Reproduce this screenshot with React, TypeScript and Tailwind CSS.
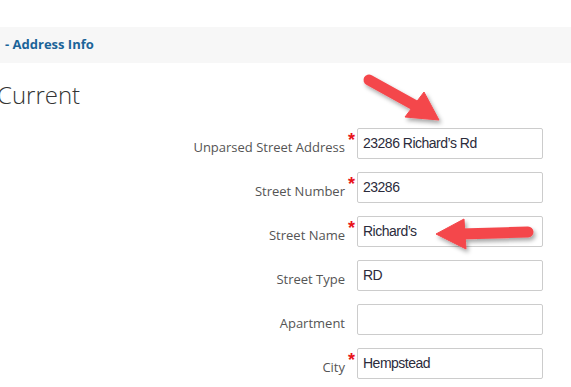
const rows = [
  { label: "Unparsed Street Address", required: true, value: "23286 Richard’s Rd" },
  { label: "Street Number", required: true, value: "23286" },
  { label: "Street Name", required: true, value: "Richard’s" },
  { label: "Street Type", required: false, value: "RD" },
  { label: "Apartment", required: false, value: "" },
  { label: "City", required: true, value: "Hempstead" },
]

function Arrows() {
  return (
    <svg
      className="absolute left-0 top-0 pointer-events-none"
      width={571}
      height={387}
      viewBox="0 0 571 387"
    >
      <defs>
        <filter id="shadow" x="-20%" y="-20%" width="140%" height="140%">
          <feDropShadow dx="2" dy="3" stdDeviation="2" floodColor="#000" floodOpacity="0.35" />
        </filter>
      </defs>
      <g filter="url(#shadow)" fill="#f4474c" stroke="#f4474c">
        <line x1="369" y1="80" x2="416" y2="106" strokeWidth="11" strokeLinecap="round" />
        <polygon points="424,92 405,117 439,120" strokeWidth="1" strokeLinejoin="round" />
        <line x1="528" y1="232" x2="460" y2="234" strokeWidth="11" strokeLinecap="round" />
        <polygon points="464,219 466,249 436,234" strokeWidth="1" strokeLinejoin="round" />
      </g>
    </svg>
  )
}

export default function App() {
  return (
    <main className="relative w-[571px] h-[387px] overflow-hidden bg-white pt-[27px] font-['Open_Sans',sans-serif]">
      <div className="h-[36px] bg-[#f7f7f7] flex items-center pl-[5px]">
        <span className="text-[13px] font-bold text-[#1b6499]">- Address Info</span>
      </div>
      <h2 className="mt-[16px] ml-[-3px] text-[24px] leading-[32px] font-light text-[#333]">Current</h2>
      <div className="mt-[17px] flex flex-col gap-[13px]">
        {rows.map((row, index) => (
          <div key={index} className="flex items-start">
            <label className="w-[345px] pt-[10px] text-right text-[13px] leading-[18px] text-[#555]">
              {row.label}
            </label>
            <span className="w-[12px] pl-[3px] pt-[3px] text-[18px] leading-[18px] font-bold text-[#e8141a] font-['Liberation_Sans',sans-serif]">
              {row.required ? "*" : ""}
            </span>
            <div className="w-[186px] h-[31px] border border-[#ccc] rounded-[2px] flex items-center px-[5px] text-[14px] tracking-[-0.5px] text-[#2b2b3b] font-['Liberation_Sans',sans-serif]">
              {row.value}
            </div>
          </div>
        ))}
      </div>
      <Arrows />
    </main>
  )
}
